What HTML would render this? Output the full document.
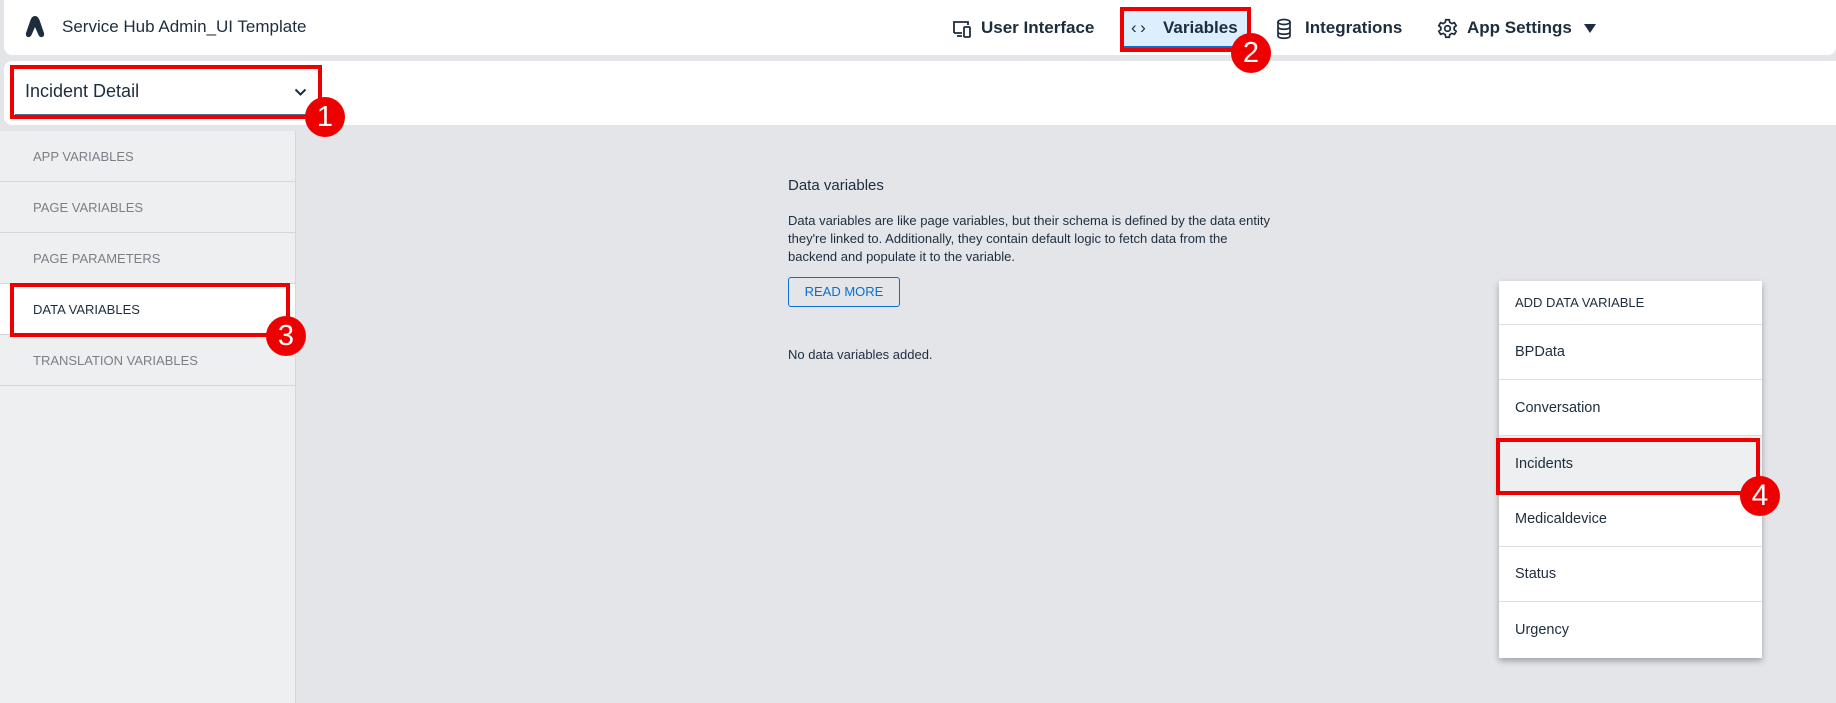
<!DOCTYPE html>
<html><head><meta charset="utf-8"><style>
*{box-sizing:border-box;margin:0;padding:0}
body{width:1836px;height:703px;background:#e4e5e9;font-family:"Liberation Sans",sans-serif;position:relative;overflow:hidden;color:#1d2d3e}
.abs{position:absolute}
.hdr{left:4px;top:0;width:1832px;height:55px;background:#fff;border-radius:0 0 8px 8px}
.bar{left:4px;top:61px;width:1832px;height:64px;background:#fff;border-radius:8px 0 0 8px}
.nav{top:18px;font-size:17px;font-weight:bold;color:#1d2d3e}
.red{border:4px solid #e00;position:absolute;z-index:5}
.badge{position:absolute;z-index:6;width:40px;height:40px;border-radius:50%;background:#e00;color:#fff;font-size:29px;text-align:center;line-height:40px;font-family:"Liberation Sans",sans-serif}
.side{left:0;top:131px;width:296px;height:572px;background:#eeeff1;border-right:1px solid #d6d7da}
.si{height:51px;border-bottom:1px solid #d6d7da;padding-left:33px;line-height:51px;font-size:13px;color:#7b7f86}
.menu{left:1499px;top:281px;width:263px;height:377px;background:#fff;box-shadow:0 3px 6px rgba(0,0,0,.3)}
.mi{border-bottom:1px solid #dcdde0;padding-left:16px;font-size:14.5px;color:#1d2d3e;display:flex;align-items:center}
</style></head><body>
<div class="abs hdr"></div>
<svg class="abs" style="left:24px;top:16px" width="22" height="22" viewBox="0 0 19 22"><path d="M9.5 0 C7 0 6 2 5 4 L0.5 17 C-0.5 21 4 23 6 19 L9.5 11 L13 19 C15 23 19.5 21 18.5 17 L14 4 C13 2 12 0 9.5 0Z" fill="#1d2d3e"/></svg>
<div class="abs" style="left:62px;top:17px;font-size:17px;color:#1d2d3e">Service Hub Admin_UI Template</div>

<svg class="abs" style="left:951px;top:19px" width="22" height="20" viewBox="0 0 20 20" fill="none" stroke="#1d2d3e" stroke-width="1.8"><path d="M2 14V3h14v3M2 14h8M5 17h5"/><rect x="12" y="8" width="6" height="10" rx="1"/></svg>
<div class="abs nav" style="left:981px">User Interface</div>
<div class="abs" style="left:1124px;top:10px;width:124px;height:39px;background:#dcefff;border-bottom:3px solid #0a6ed1"></div>
<div class="abs nav" style="left:1131px;font-weight:normal">&lsaquo;&thinsp;&rsaquo;</div>
<div class="abs nav" style="left:1163px">Variables</div>
<div class="red" style="left:1120px;top:7px;width:131px;height:45px"></div>
<div class="badge" style="left:1231px;top:33px">2</div>
<svg class="abs" style="left:1276px;top:18px" width="16" height="22" viewBox="0 0 16 22" fill="none" stroke="#1d2d3e" stroke-width="1.7"><ellipse cx="8" cy="4" rx="6" ry="2.5"/><path d="M2 4v14c0 3 12 3 12 0V4M2 9c0 3 12 3 12 0M2 14c0 3 12 3 12 0"/></svg>
<div class="abs nav" style="left:1305px">Integrations</div>
<svg class="abs" style="left:1437px;top:18px" width="21" height="21" viewBox="0 0 24 24" fill="none" stroke="#1d2d3e" stroke-width="2"><circle cx="12" cy="12" r="3.2"/><path d="M10 2h4l.6 3 2.4 1.4 2.9-1 2 3.4-2.3 2v2.4l2.3 2-2 3.4-2.9-1L14.6 19l-.6 3h-4l-.6-3L7 17.6l-2.9 1-2-3.4 2.3-2v-2.4l-2.3-2 2-3.4 2.9 1L9.4 5z"/></svg>
<div class="abs nav" style="left:1467px">App Settings</div>
<div class="abs" style="left:1584px;top:24px;width:0;height:0;border-left:6px solid transparent;border-right:6px solid transparent;border-top:9px solid #1d2d3e"></div>

<div class="abs bar"></div>
<div class="abs" style="left:15px;top:70px;width:302px;height:46px;border-bottom:2px solid #556b82"></div>
<div class="abs" style="left:25px;top:81px;font-size:18px;color:#1d2d3e">Incident Detail</div>
<svg class="abs" style="left:294px;top:88px" width="13" height="9" viewBox="0 0 13 9"><path d="M1.5 1.5l5 5 5-5" fill="none" stroke="#1d2d3e" stroke-width="2"/></svg>
<div class="red" style="left:10px;top:65px;width:312px;height:54px"></div>
<div class="badge" style="left:305px;top:97px">1</div>

<div class="abs side">
<div class="si">APP VARIABLES</div>
<div class="si">PAGE VARIABLES</div>
<div class="si">PAGE PARAMETERS</div>
<div class="si" style="background:#fff;color:#1d2d3e">DATA VARIABLES</div>
<div class="si">TRANSLATION VARIABLES</div>
</div>
<div class="red" style="left:10px;top:283px;width:280px;height:54px"></div>
<div class="badge" style="left:266px;top:316px">3</div>

<div class="abs" style="left:788px;top:177px;font-size:15px">Data variables</div>
<div class="abs" style="left:788px;top:212px;width:490px;font-size:13px;line-height:18px">Data variables are like page variables, but their schema is defined by the data entity they're linked to. Additionally, they contain default logic to fetch data from the backend and populate it to the variable.</div>
<div class="abs" style="left:788px;top:277px;width:112px;height:30px;border:1px solid #0a6ed1;border-radius:3px;color:#0a6ed1;font-size:13px;text-align:center;line-height:28px">READ MORE</div>
<div class="abs" style="left:788px;top:347px;font-size:13px">No data variables added.</div>

<div class="abs menu">
<div class="mi" style="height:44px;font-size:13px">ADD DATA VARIABLE</div>
<div class="mi" style="height:55px">BPData</div>
<div class="mi" style="height:56px">Conversation</div>
<div class="mi" style="height:56px;background:#eeeff1">Incidents</div>
<div class="mi" style="height:55px">Medicaldevice</div>
<div class="mi" style="height:55px">Status</div>
<div class="mi" style="height:56px;border-bottom:none">Urgency</div>
</div>
<div class="red" style="left:1496px;top:438px;width:264px;height:57px"></div>
<div class="badge" style="left:1740px;top:476px;width:40px;height:40px;line-height:40px;font-size:30px">4</div>
</body></html>
